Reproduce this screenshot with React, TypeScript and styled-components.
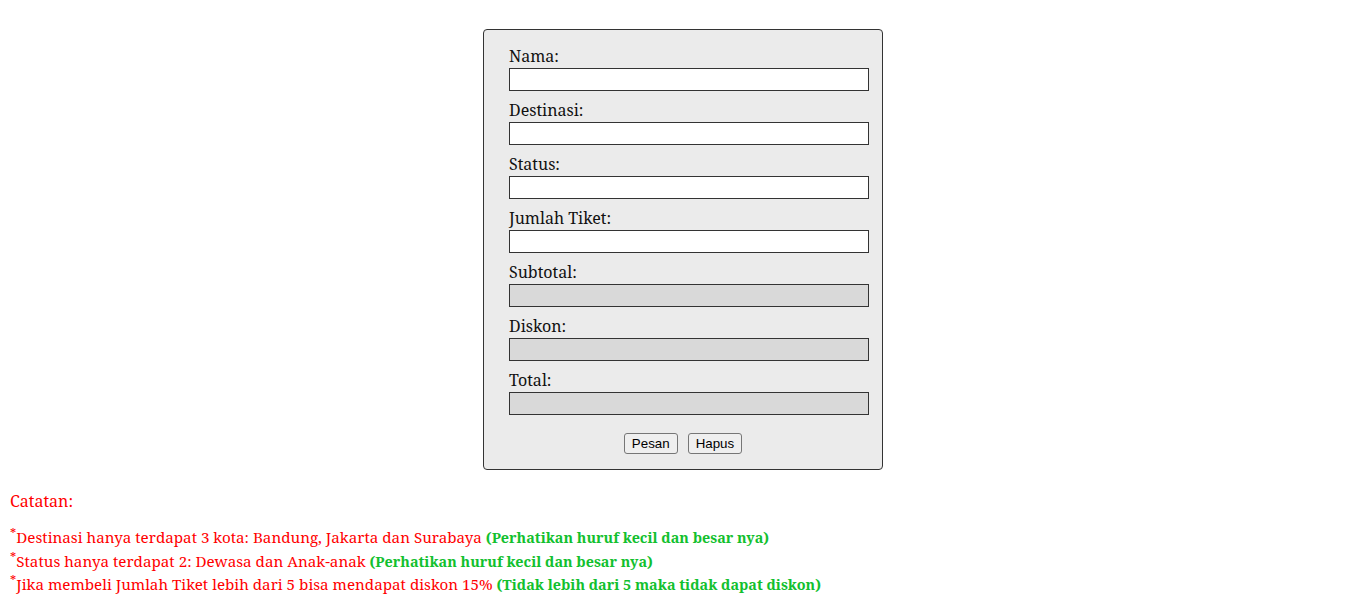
import { createGlobalStyle, styled } from "styled-components";

const GlobalStyle = createGlobalStyle`
  body {
    margin: 0;
    background: #ffffff;
    font-family: "Noto Serif", "DejaVu Serif", serif;
  }
`;

const Page = styled.div`
  padding: 29px 8px 0 8px;
`;

const FormBox = styled.form`
  width: 400px;
  box-sizing: border-box;
  margin: 0 auto;
  padding: 15px 13px 15px 25px;
  background-color: #ebebeb;
  border: 1px solid #333333;
  border-radius: 4px;
`;

const Field = styled.div`
  margin-bottom: 8px;
`;

const Label = styled.label`
  display: block;
  font-size: 16px;
  line-height: 22px;
  margin-bottom: 1px;
  color: #111111;
`;

const Input = styled.input<{ $readOnly?: boolean }>`
  display: block;
  box-sizing: border-box;
  width: 360px;
  height: 23px;
  padding: 0 5px;
  margin: 0;
  border: 1px solid #333333;
  border-radius: 0;
  outline: none;
  background-color: ${(props) => (props.$readOnly ? "#d9d9d9" : "#ffffff")};
  font-family: "Liberation Sans", Arial, sans-serif;
  font-size: 13px;
`;

const Buttons = styled.div`
  display: flex;
  justify-content: center;
  gap: 10px;
  padding-top: 10px;
  margin-left: -12px;
`;

const Button = styled.button`
  height: 21px;
  padding: 1px 7px;
  font-family: "Liberation Sans", Arial, sans-serif;
  font-size: 13.33px;
  color: #000000;
  background-color: #efefef;
  border: 1px solid #767676;
  border-radius: 3px;
`;

const Notes = styled.div`
  padding: 20px 0 0 2px;
  color: #ff0000;
`;

const NotesTitle = styled.div`
  font-size: 16px;
  line-height: 22px;
  margin-bottom: 14px;
`;

const NoteLine = styled.div`
  font-size: 15.2px;
  line-height: 23.5px;
  white-space: nowrap;
`;

const Star = styled.sup`
  font-size: 12.5px;
  line-height: 0;
  vertical-align: 5px;
`;

const Hint = styled.b`
  font-size: 14.4px;
  color: #12c02e;
`;

const fields = [
  { label: "Nama:", readOnly: false },
  { label: "Destinasi:", readOnly: false },
  { label: "Status:", readOnly: false },
  { label: "Jumlah Tiket:", readOnly: false },
  { label: "Subtotal:", readOnly: true },
  { label: "Diskon:", readOnly: true },
  { label: "Total:", readOnly: true },
];

export default function App() {
  return (
    <>
      <GlobalStyle />
      <Page>
        <FormBox onSubmit={(e) => e.preventDefault()}>
          {fields.map((f) => (
            <Field key={f.label}>
              <Label>{f.label}</Label>
              <Input type="text" readOnly={f.readOnly} $readOnly={f.readOnly} />
            </Field>
          ))}
          <Buttons>
            <Button type="submit">Pesan</Button>
            <Button type="reset">Hapus</Button>
          </Buttons>
        </FormBox>
        <Notes>
          <NotesTitle>Catatan:</NotesTitle>
          <NoteLine>
            <Star>*</Star>Destinasi hanya terdapat 3 kota: Bandung, Jakarta dan Surabaya{" "}
            <Hint>(Perhatikan huruf kecil dan besar nya)</Hint>
          </NoteLine>
          <NoteLine>
            <Star>*</Star>Status hanya terdapat 2: Dewasa dan Anak-anak{" "}
            <Hint>(Perhatikan huruf kecil dan besar nya)</Hint>
          </NoteLine>
          <NoteLine>
            <Star>*</Star>Jika membeli Jumlah Tiket lebih dari 5 bisa mendapat diskon 15%{" "}
            <Hint>(Tidak lebih dari 5 maka tidak dapat diskon)</Hint>
          </NoteLine>
        </Notes>
      </Page>
    </>
  );
}
